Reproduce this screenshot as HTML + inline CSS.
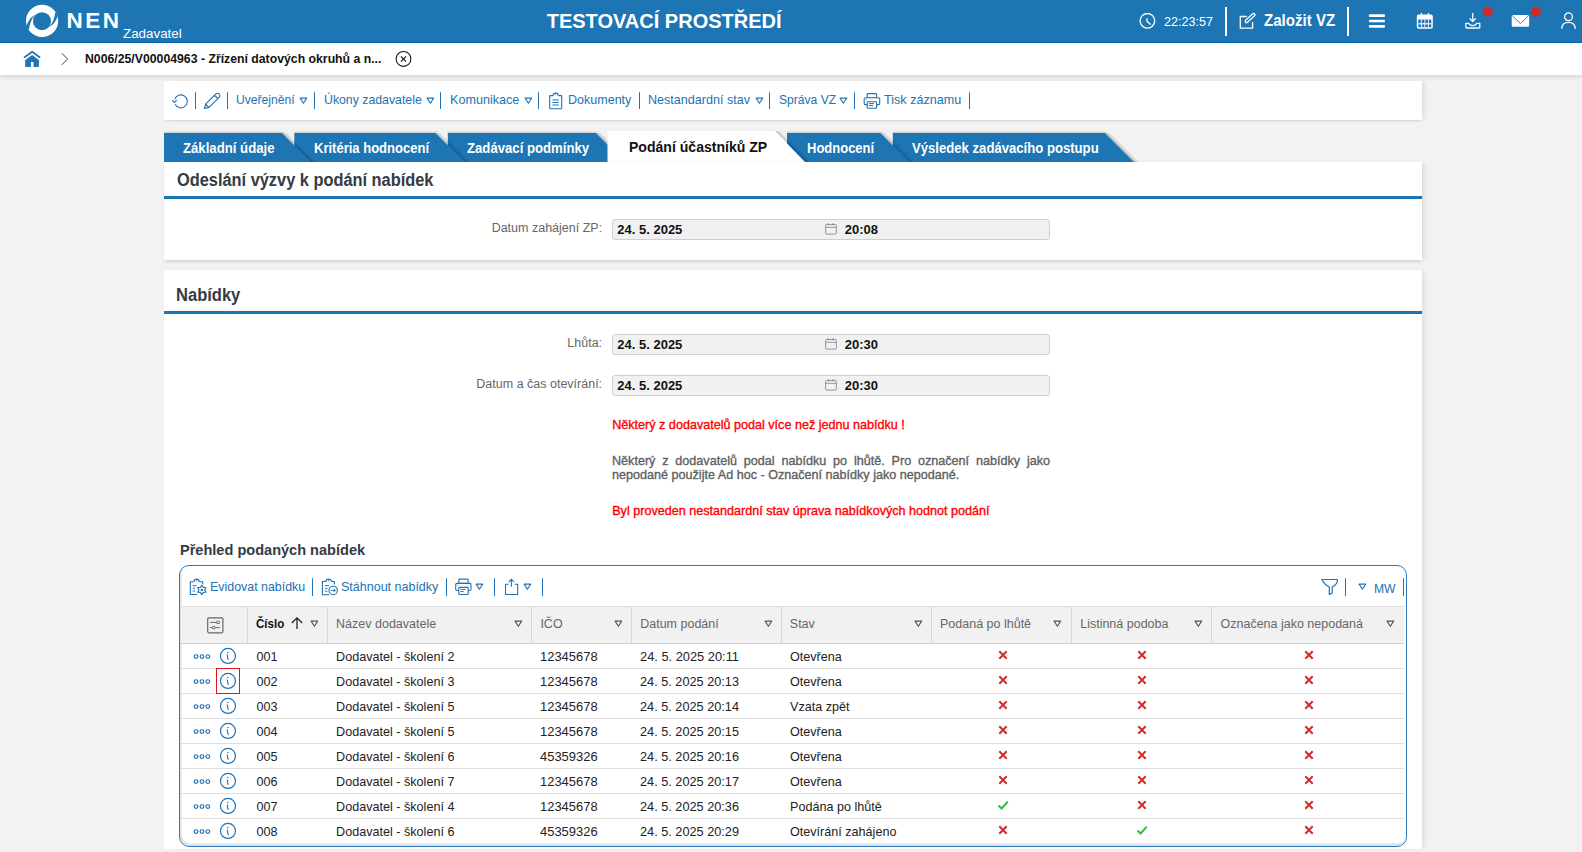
<!DOCTYPE html>
<html><head><meta charset="utf-8"><title>NEN</title><style>
*{margin:0;padding:0;box-sizing:border-box}
html,body{width:1582px;height:852px;overflow:hidden}
body{background:#f2f2f2;font-family:"Liberation Sans", sans-serif;position:relative}
.t{position:absolute;white-space:nowrap;line-height:1}
.r{position:absolute}
</style></head><body>
<div class="r" style="left:0px;top:0px;width:1582px;height:43px;background:#1d75b4;border-bottom:1px solid #0b68ae"></div>
<svg class="r" style="left:22px;top:2px;" width="40" height="40" viewBox="0 0 40 40"><circle cx="20.1" cy="18.9" r="16.1" fill="#fff"/><circle cx="20" cy="19.2" r="9" fill="#1d75b4"/><path d="M13.2 12.8 Q6.6 16.2 4.1 24.8 L6.9 27.9 Q7.8 18.6 13.2 12.8 Z" fill="#1d75b4"/><path d="M26.9 25.3 Q33.5 21.9 36 13.3 L33.2 10.2 Q32.3 19.5 26.9 25.3 Z" fill="#1d75b4"/></svg>
<div class="t" style="left:66.40px;top:9.65px;font-size:22.5px;color:#fff;font-weight:bold;letter-spacing:2.5px;">NEN</div>
<div class="t" style="left:123.30px;top:27.19px;font-size:13.6px;color:#fff;transform:scaleX(0.9827);transform-origin:0 0;">Zadavatel</div>
<div class="t" style="left:546.70px;top:10.87px;font-size:20px;color:#fff;font-weight:bold;">TESTOVACÍ PROSTŘEDÍ</div>
<svg class="r" style="left:1139px;top:13px;" width="17" height="17" viewBox="0 0 17 17"><circle cx="8.4" cy="7.8" r="7.3" fill="none" stroke="#fff" stroke-width="1.3"/><path d="M8 5.2V8.3L11.6 11.5" fill="none" stroke="#fff" stroke-width="1.3"/></svg>
<div class="t" style="left:1163.80px;top:16.06px;font-size:12.8px;color:#fff;transform:scaleX(0.9833);transform-origin:0 0;">22:23:57</div>
<div class="r" style="left:1225px;top:7px;width:2px;height:29px;background:#fff"></div>
<svg class="r" style="left:1238px;top:12px;" width="19" height="18" viewBox="0 0 19 18"><path d="M8.8 4.5H2.3V16.2H14.6V10" fill="none" stroke="#fff" stroke-width="1.3"/><path d="M8.6 9.3L15.6 2.8" stroke="#fff" stroke-width="4" stroke-linecap="round"/><path d="M8.6 9.3L15.6 2.8" stroke="#1d75b4" stroke-width="1.5" stroke-linecap="round"/></svg>
<div class="t" style="left:1263.80px;top:12.73px;font-size:15.8px;color:#fff;font-weight:bold;transform:scaleX(0.9557);transform-origin:0 0;">Založit VZ</div>
<div class="r" style="left:1347px;top:7px;width:2px;height:29px;background:#fff"></div>
<svg class="r" style="left:1368px;top:13px;" width="18" height="16" viewBox="0 0 18 16"><g fill="#fff"><rect x="0.9" y="1.3" width="16.1" height="2.7" rx="1"/><rect x="0.9" y="6.7" width="16.1" height="2.5" rx="1"/><rect x="0.9" y="11.95" width="16.1" height="2.7" rx="1"/></g></svg>
<svg class="r" style="left:1416px;top:12px;" width="18" height="18" viewBox="0 0 18 18"><rect x="1.55" y="3.3" width="14.5" height="12.65" rx="1.3" fill="none" stroke="#fff" stroke-width="1.5"/><rect x="1.5" y="3.3" width="14.6" height="4.3" fill="#fff"/><path d="M5.4 1V4M12.5 1V4" stroke="#fff" stroke-width="1.3"/><g fill="#fff"><rect x="2.3" y="11.2" width="13" height="1.2"/><rect x="4.9" y="7.5" width="0.9" height="8"/><rect x="8.4" y="7.5" width="0.9" height="8"/><rect x="11.9" y="7.5" width="0.9" height="8"/></g></svg>
<svg class="r" style="left:1464px;top:12px;" width="18" height="18" viewBox="0 0 18 18"><path d="M8.7 1V9.4M5.6 6.4L8.7 9.5L11.8 6.4" fill="none" stroke="#fff" stroke-width="1.3"/><path d="M1.8 11.4H4.6Q6 13.6 8.7 13.6Q11.4 13.6 12.8 11.4H15.8V15Q15.8 16 14.8 16H2.8Q1.8 16 1.8 15Z" fill="none" stroke="#fff" stroke-width="1.3" stroke-linejoin="round"/></svg>
<svg class="r" style="left:1482px;top:6px;" width="12" height="12" viewBox="0 0 12 12"><circle cx="5.8" cy="5.7" r="5.1" fill="#cc2a2a"/></svg>
<svg class="r" style="left:1511px;top:14px;" width="19" height="14" viewBox="0 0 19 14"><rect x="0.7" y="1.1" width="17.5" height="11.7" rx="1.6" fill="#fff"/><path d="M1.3 1.7L9.45 9.6L17.6 1.7" fill="none" stroke="#1e74b4" stroke-width="0.9"/></svg>
<svg class="r" style="left:1530px;top:6px;" width="12" height="12" viewBox="0 0 12 12"><circle cx="5.9" cy="5.7" r="5.1" fill="#cc2a2a"/></svg>
<svg class="r" style="left:1560px;top:12px;" width="17" height="18" viewBox="0 0 17 18"><circle cx="8.5" cy="4.7" r="3.9" fill="none" stroke="#fff" stroke-width="1.3"/><path d="M1.7 16.9Q2 10.4 8.5 10.4Q15 10.4 15.3 16.9" fill="none" stroke="#fff" stroke-width="1.3"/></svg>
<div class="r" style="left:0px;top:43px;width:1582px;height:32px;background:#fff;box-shadow:0 2px 5px rgba(0,0,0,0.12)"></div>
<svg class="r" style="left:23px;top:50px;" width="18" height="18" viewBox="0 0 18 18"><path d="M1.5 7.2L9.2 1.7L16.6 7.2" fill="none" stroke="#1e74b4" stroke-width="1.7" stroke-linecap="round" stroke-linejoin="round"/><path d="M2.2 10L9.2 5.1L15.9 10V16.2Q15.9 16.9 15.2 16.9H10.5V11.9H7.9V16.9H2.9Q2.2 16.9 2.2 16.2Z" fill="#1e74b4"/></svg>
<svg class="r" style="left:60px;top:52px;" width="10" height="14" viewBox="0 0 10 14"><path d="M1.8 1.2L7.6 7L1.8 12.8" fill="none" stroke="#3a4450" stroke-width="1"/></svg>
<div class="t" style="left:85.40px;top:52.83px;font-size:12.6px;color:#111;font-weight:bold;transform:scaleX(0.9736);transform-origin:0 0;">N006/25/V00004963 - Zřízení datových okruhů a n...</div>
<svg class="r" style="left:395px;top:50px;" width="17" height="17" viewBox="0 0 17 17"><circle cx="8.5" cy="8.95" r="7.4" fill="none" stroke="#111" stroke-width="1.05"/><path d="M6 6.3L11 11.6M11 6.3L6 11.6" stroke="#111" stroke-width="1.1"/></svg>
<div class="r" style="left:164px;top:81px;width:1258px;height:39px;background:#fff;box-shadow:0 2px 2px -1px rgba(0,0,0,0.13), 4px 0 4px -1px rgba(0,0,0,0.07)"></div>
<div class="r" style="left:195px;top:92px;width:1.2px;height:17px;border-radius:0.6px;background:#2272b4"></div>
<div class="r" style="left:227px;top:92px;width:1.2px;height:17px;border-radius:0.6px;background:#2272b4"></div>
<div class="r" style="left:314px;top:92px;width:1.2px;height:17px;border-radius:0.6px;background:#2272b4"></div>
<div class="r" style="left:440px;top:92px;width:1.2px;height:17px;border-radius:0.6px;background:#2272b4"></div>
<div class="r" style="left:538px;top:92px;width:1.2px;height:17px;border-radius:0.6px;background:#2272b4"></div>
<div class="r" style="left:639px;top:92px;width:1.2px;height:17px;border-radius:0.6px;background:#2272b4"></div>
<div class="r" style="left:769px;top:92px;width:1.2px;height:17px;border-radius:0.6px;background:#2272b4"></div>
<div class="r" style="left:854px;top:92px;width:1.2px;height:17px;border-radius:0.6px;background:#2272b4"></div>
<div class="r" style="left:969px;top:92px;width:1.2px;height:17px;border-radius:0.6px;background:#2272b4"></div>
<svg class="r" style="left:171px;top:92px;" width="18" height="18" viewBox="0 0 18 18"><path d="M3.7 7.4A6.45 6.45 0 1 1 4.1 12.3" fill="none" stroke="#2272b4" stroke-width="1.1"/><path d="M1.3 8.1L3.5 10.4L5.8 8.1" fill="none" stroke="#2272b4" stroke-width="1.1"/></svg>
<svg class="r" style="left:203px;top:92px;" width="19" height="18" viewBox="0 0 19 18"><path d="M1.4 16.4L2.6 12.2L12.8 2Q14.6 0.6 16.2 2Q17.6 3.6 16.2 5.4L6 15.4Z M11.6 3.4L14.7 6.5 M2.6 12.2L6 15.4" fill="none" stroke="#2272b4" stroke-width="1.1" stroke-linejoin="round"/></svg>
<div class="t" style="left:236.10px;top:93.70px;font-size:12.4px;color:#2272b4;transform:scaleX(0.9789);transform-origin:0 0;">Uveřejnění</div>
<div class="t" style="left:323.60px;top:93.70px;font-size:12.4px;color:#2272b4;transform:scaleX(0.9922);transform-origin:0 0;">Úkony zadavatele</div>
<div class="t" style="left:450.10px;top:93.70px;font-size:12.4px;color:#2272b4;transform:scaleX(1.0170);transform-origin:0 0;">Komunikace</div>
<div class="t" style="left:567.70px;top:93.70px;font-size:12.4px;color:#2272b4;transform:scaleX(1.0109);transform-origin:0 0;">Dokumenty</div>
<div class="t" style="left:648.20px;top:93.70px;font-size:12.4px;color:#2272b4;transform:scaleX(1.0145);transform-origin:0 0;">Nestandardní stav</div>
<div class="t" style="left:778.50px;top:93.70px;font-size:12.4px;color:#2272b4;transform:scaleX(0.9748);transform-origin:0 0;">Správa VZ</div>
<div class="t" style="left:884.30px;top:93.70px;font-size:12.4px;color:#2272b4;transform:scaleX(1.0168);transform-origin:0 0;">Tisk záznamu</div>
<svg class="r" style="left:299.0px;top:96.5px;" width="9" height="8" viewBox="0 0 9 8"><path d="M1.1 1.1H7.7L4.4 6.2Z" fill="none" stroke="#2272b4" stroke-width="1.1" stroke-linejoin="round"/></svg>
<svg class="r" style="left:425.9px;top:96.5px;" width="9" height="8" viewBox="0 0 9 8"><path d="M1.1 1.1H7.7L4.4 6.2Z" fill="none" stroke="#2272b4" stroke-width="1.1" stroke-linejoin="round"/></svg>
<svg class="r" style="left:524.1px;top:96.5px;" width="9" height="8" viewBox="0 0 9 8"><path d="M1.1 1.1H7.7L4.4 6.2Z" fill="none" stroke="#2272b4" stroke-width="1.1" stroke-linejoin="round"/></svg>
<svg class="r" style="left:754.9px;top:96.5px;" width="9" height="8" viewBox="0 0 9 8"><path d="M1.1 1.1H7.7L4.4 6.2Z" fill="none" stroke="#2272b4" stroke-width="1.1" stroke-linejoin="round"/></svg>
<svg class="r" style="left:839.4px;top:96.5px;" width="9" height="8" viewBox="0 0 9 8"><path d="M1.1 1.1H7.7L4.4 6.2Z" fill="none" stroke="#2272b4" stroke-width="1.1" stroke-linejoin="round"/></svg>
<svg class="r" style="left:548px;top:92px;" width="16" height="18" viewBox="0 0 16 18"><path d="M5.1 3.6H1.7V16.2Q1.7 16.7 2.2 16.7H13.2Q13.7 16.7 13.7 16.2V3.6H10.2" fill="none" stroke="#2272b4" stroke-width="1.1" stroke-linejoin="round"/><path d="M5.1 3.6Q5.1 1.1 7.65 1.1Q10.2 1.1 10.2 3.6" fill="none" stroke="#2272b4" stroke-width="1.1"/><circle cx="7.65" cy="2.7" r="0.55" fill="#2272b4"/><path d="M4.4 8H10.9M4.4 10.5H10.9M4.4 13H10.9" stroke="#2272b4" stroke-width="1"/></svg>
<svg class="r" style="left:863px;top:92px;" width="18" height="18" viewBox="0 0 18 18"><rect x="4.2" y="1.6" width="9.4" height="4.2" rx="0.8" fill="none" stroke="#2272b4" stroke-width="1.1"/><rect x="1.2" y="5.8" width="15.5" height="6.8" rx="1.2" fill="#fff" stroke="#2272b4" stroke-width="1.1"/><rect x="4.2" y="9.7" width="9.4" height="6.6" rx="0.6" fill="#fff" stroke="#2272b4" stroke-width="1.1"/><path d="M6 11.6H11M6 13.6H10" stroke="#2272b4" stroke-width="1"/><circle cx="3.6" cy="7.6" r="0.5" fill="#2272b4"/></svg>
<svg class="r" style="left:0px;top:0px;pointer-events:none" width="1582" height="852" viewBox="0 0 1582 852"><rect x="892.8" y="131" width="214.20000000000005" height="2" fill="#000" fill-opacity="0.06"/><rect x="892.8" y="132" width="213.20000000000005" height="1" fill="#000" fill-opacity="0.06"/><path d="M1105.8 133 L1134.8 162" stroke="#000" stroke-opacity="0.22" stroke-width="1"/><path d="M1106.8 133 L1135.8 162" stroke="#000" stroke-opacity="0.16" stroke-width="1"/><path d="M1107.8 133 L1136.8 162" stroke="#000" stroke-opacity="0.11" stroke-width="1"/><path d="M1108.8 133 L1137.8 162" stroke="#000" stroke-opacity="0.07" stroke-width="1"/><path d="M1109.8 133 L1138.8 162" stroke="#000" stroke-opacity="0.035" stroke-width="1"/><path d="M892.8 133 H1105 L1134 162 H892.8 Z" fill="#1d75b4"/><rect x="787" y="131" width="95.5" height="2" fill="#000" fill-opacity="0.06"/><rect x="787" y="132" width="94.5" height="1" fill="#000" fill-opacity="0.06"/><path d="M881.3 133 L910.3 162" stroke="#000" stroke-opacity="0.22" stroke-width="1"/><path d="M882.3 133 L911.3 162" stroke="#000" stroke-opacity="0.16" stroke-width="1"/><path d="M883.3 133 L912.3 162" stroke="#000" stroke-opacity="0.11" stroke-width="1"/><path d="M884.3 133 L913.3 162" stroke="#000" stroke-opacity="0.07" stroke-width="1"/><path d="M885.3 133 L914.3 162" stroke="#000" stroke-opacity="0.035" stroke-width="1"/><path d="M787 133 H880.5 L909.5 162 H787 Z" fill="#1d75b4"/><rect x="447.8" y="131" width="150.2" height="2" fill="#000" fill-opacity="0.06"/><rect x="447.8" y="132" width="149.2" height="1" fill="#000" fill-opacity="0.06"/><path d="M596.8 133 L625.8 162" stroke="#000" stroke-opacity="0.22" stroke-width="1"/><path d="M597.8 133 L626.8 162" stroke="#000" stroke-opacity="0.16" stroke-width="1"/><path d="M598.8 133 L627.8 162" stroke="#000" stroke-opacity="0.11" stroke-width="1"/><path d="M599.8 133 L628.8 162" stroke="#000" stroke-opacity="0.07" stroke-width="1"/><path d="M600.8 133 L629.8 162" stroke="#000" stroke-opacity="0.035" stroke-width="1"/><path d="M447.8 133 H596 L625 162 H447.8 Z" fill="#1d75b4"/><rect x="294.3" y="131" width="143.3" height="2" fill="#000" fill-opacity="0.06"/><rect x="294.3" y="132" width="142.3" height="1" fill="#000" fill-opacity="0.06"/><path d="M436.40000000000003 133 L465.40000000000003 162" stroke="#000" stroke-opacity="0.22" stroke-width="1"/><path d="M437.40000000000003 133 L466.40000000000003 162" stroke="#000" stroke-opacity="0.16" stroke-width="1"/><path d="M438.40000000000003 133 L467.40000000000003 162" stroke="#000" stroke-opacity="0.11" stroke-width="1"/><path d="M439.40000000000003 133 L468.40000000000003 162" stroke="#000" stroke-opacity="0.07" stroke-width="1"/><path d="M440.40000000000003 133 L469.40000000000003 162" stroke="#000" stroke-opacity="0.035" stroke-width="1"/><path d="M294.3 133 H435.6 L464.6 162 H294.3 Z" fill="#1d75b4"/><rect x="164" y="131" width="120" height="2" fill="#000" fill-opacity="0.06"/><rect x="164" y="132" width="119" height="1" fill="#000" fill-opacity="0.06"/><path d="M282.8 133 L311.8 162" stroke="#000" stroke-opacity="0.22" stroke-width="1"/><path d="M283.8 133 L312.8 162" stroke="#000" stroke-opacity="0.16" stroke-width="1"/><path d="M284.8 133 L313.8 162" stroke="#000" stroke-opacity="0.11" stroke-width="1"/><path d="M285.8 133 L314.8 162" stroke="#000" stroke-opacity="0.07" stroke-width="1"/><path d="M286.8 133 L315.8 162" stroke="#000" stroke-opacity="0.035" stroke-width="1"/><path d="M164 133 H282 L311 162 H164 Z" fill="#1d75b4"/><path d="M775.6999999999999 131 L806.6999999999999 162" stroke="#000" stroke-opacity="0.22" stroke-width="1"/><path d="M776.6999999999999 131 L807.6999999999999 162" stroke="#000" stroke-opacity="0.16" stroke-width="1"/><path d="M777.6999999999999 131 L808.6999999999999 162" stroke="#000" stroke-opacity="0.11" stroke-width="1"/><path d="M778.6999999999999 131 L809.6999999999999 162" stroke="#000" stroke-opacity="0.07" stroke-width="1"/><path d="M779.6999999999999 131 L810.6999999999999 162" stroke="#000" stroke-opacity="0.035" stroke-width="1"/><path d="M607.5 131 H774.9 L804.9 162 H607.5 Z" fill="#fff"/></svg>
<div class="t" style="left:183.30px;top:142.02px;font-size:13.8px;color:#fff;font-weight:bold;transform:scaleX(0.9546);transform-origin:0 0;">Základní údaje</div>
<div class="t" style="left:313.50px;top:142.02px;font-size:13.8px;color:#fff;font-weight:bold;transform:scaleX(0.9436);transform-origin:0 0;">Kritéria hodnocení</div>
<div class="t" style="left:466.70px;top:142.02px;font-size:13.8px;color:#fff;font-weight:bold;transform:scaleX(0.9533);transform-origin:0 0;">Zadávací podmínky</div>
<div class="t" style="left:806.50px;top:142.02px;font-size:13.8px;color:#fff;font-weight:bold;transform:scaleX(0.9417);transform-origin:0 0;">Hodnocení</div>
<div class="t" style="left:912.30px;top:142.02px;font-size:13.8px;color:#fff;font-weight:bold;transform:scaleX(0.9509);transform-origin:0 0;">Výsledek zadávacího postupu</div>
<div class="r" style="left:164px;top:162px;width:1258px;height:98px;background:#fff;box-shadow:0 3px 3px -1px rgba(0,0,0,0.12), 4px 0 4px -1px rgba(0,0,0,0.07)"></div>
<div class="t" style="left:629.00px;top:139.93px;font-size:14.5px;color:#111;font-weight:bold;transform:scaleX(0.9691);transform-origin:0 0;">Podání účastníků ZP</div>
<div class="t" style="left:176.70px;top:170.66px;font-size:18px;color:#343b43;font-weight:bold;transform:scaleX(0.9091);transform-origin:0 0;">Odeslání výzvy k podání nabídek</div>
<div class="r" style="left:164px;top:196px;width:1258px;height:3px;background:#1d75b4"></div>
<div class="r" style="left:612px;top:219px;width:438px;height:21px;background:#f1f1f1;border:1px solid #cfcfcf;border-radius:3px"></div>
<div class="t" style="right:979.90px;top:222.22px;font-size:12.5px;color:#666;">Datum zahájení ZP:</div>
<div class="t" style="left:617.30px;top:223.20px;font-size:13px;color:#111;font-weight:bold;">24. 5. 2025</div>
<svg class="r" style="left:824px;top:223px;" width="14" height="13" viewBox="0 0 14 13"><rect x="1.65" y="1.5" width="10.7" height="9.6" rx="0.9" fill="none" stroke="#8a8a8a" stroke-width="0.9"/><path d="M1.6 4.3H12.4M4.3 0V2.3M9 0V2.3" stroke="#8a8a8a" stroke-width="0.9"/></svg>
<div class="t" style="left:844.70px;top:223.20px;font-size:13px;color:#111;font-weight:bold;">20:08</div>
<div class="r" style="left:164px;top:270px;width:1258px;height:579px;background:#fff;box-shadow:4px 0 4px -1px rgba(0,0,0,0.07)"></div>
<div class="t" style="left:176.40px;top:285.56px;font-size:18px;color:#343b43;font-weight:bold;transform:scaleX(0.9183);transform-origin:0 0;">Nabídky</div>
<div class="r" style="left:164px;top:311px;width:1258px;height:3px;background:#1d75b4"></div>
<div class="r" style="left:612px;top:334px;width:438px;height:21px;background:#f1f1f1;border:1px solid #cfcfcf;border-radius:3px"></div>
<div class="t" style="right:979.90px;top:337.02px;font-size:12.5px;color:#666;">Lhůta:</div>
<div class="t" style="left:617.30px;top:338.20px;font-size:13px;color:#111;font-weight:bold;">24. 5. 2025</div>
<svg class="r" style="left:824px;top:338px;" width="14" height="13" viewBox="0 0 14 13"><rect x="1.65" y="1.5" width="10.7" height="9.6" rx="0.9" fill="none" stroke="#8a8a8a" stroke-width="0.9"/><path d="M1.6 4.3H12.4M4.3 0V2.3M9 0V2.3" stroke="#8a8a8a" stroke-width="0.9"/></svg>
<div class="t" style="left:844.70px;top:338.20px;font-size:13px;color:#111;font-weight:bold;">20:30</div>
<div class="r" style="left:612px;top:375px;width:438px;height:21px;background:#f1f1f1;border:1px solid #cfcfcf;border-radius:3px"></div>
<div class="t" style="right:979.90px;top:377.62px;font-size:12.5px;color:#666;">Datum a čas otevírání:</div>
<div class="t" style="left:617.30px;top:379.20px;font-size:13px;color:#111;font-weight:bold;">24. 5. 2025</div>
<svg class="r" style="left:824px;top:379px;" width="14" height="13" viewBox="0 0 14 13"><rect x="1.65" y="1.5" width="10.7" height="9.6" rx="0.9" fill="none" stroke="#8a8a8a" stroke-width="0.9"/><path d="M1.6 4.3H12.4M4.3 0V2.3M9 0V2.3" stroke="#8a8a8a" stroke-width="0.9"/></svg>
<div class="t" style="left:844.70px;top:379.20px;font-size:13px;color:#111;font-weight:bold;">20:30</div>
<div class="t" style="left:612.20px;top:418.83px;font-size:12.6px;color:#ff0000;-webkit-text-stroke:0.35px currentColor;">Některý z dodavatelů podal více než jednu nabídku !</div>
<div class="t" style="left:612px;top:453.53px;width:438px;font-size:12.6px;line-height:14.6px;color:#5f5f5f;white-space:normal;text-align:justify;-webkit-text-stroke:0.35px currentColor;">Některý z dodavatelů podal nabídku po lhůtě. Pro označení nabídky jako nepodané použijte Ad hoc - Označení nabídky jako nepodané.</div>
<div class="t" style="left:612.20px;top:505.43px;font-size:12.6px;color:#ff0000;-webkit-text-stroke:0.35px currentColor;">Byl proveden nestandardní stav úprava nabídkových hodnot podání</div>
<div class="t" style="left:179.60px;top:542.30px;font-size:15px;color:#343b43;font-weight:bold;transform:scaleX(0.9696);transform-origin:0 0;">Přehled podaných nabídek</div>
<div class="r" style="left:179px;top:564.5px;width:1228px;height:282.5px;border:1.3px solid #2f7bbf;border-radius:10px;background:#fff;box-shadow:inset 1.5px -2.5px 1px rgba(0,0,0,0.12)"></div>
<div class="r" style="left:312px;top:578px;width:1.2px;height:18px;border-radius:0.6px;background:#2272b4"></div>
<div class="r" style="left:446px;top:578px;width:1.2px;height:18px;border-radius:0.6px;background:#2272b4"></div>
<div class="r" style="left:494px;top:578px;width:1.2px;height:18px;border-radius:0.6px;background:#2272b4"></div>
<div class="r" style="left:542px;top:578px;width:1.2px;height:18px;border-radius:0.6px;background:#2272b4"></div>
<div class="r" style="left:1345px;top:578px;width:1.2px;height:18px;border-radius:0.6px;background:#2272b4"></div>
<div class="r" style="left:1403px;top:578px;width:1.2px;height:18px;border-radius:0.6px;background:#2272b4"></div>
<div class="t" style="left:210.00px;top:580.70px;font-size:12.4px;color:#2272b4;transform:scaleX(1.0018);transform-origin:0 0;">Evidovat nabídku</div>
<div class="t" style="left:341.40px;top:580.70px;font-size:12.4px;color:#2272b4;transform:scaleX(1.0091);transform-origin:0 0;">Stáhnout nabídky</div>
<div class="t" style="left:1373.90px;top:582.80px;font-size:12.4px;color:#2272b4;transform:scaleX(0.9803);transform-origin:0 0;">MW</div>
<svg class="r" style="left:475.1px;top:583.3px;" width="9" height="8" viewBox="0 0 9 8"><path d="M1.1 1.1H7.7L4.4 6.2Z" fill="none" stroke="#2272b4" stroke-width="1.1" stroke-linejoin="round"/></svg>
<svg class="r" style="left:523.2px;top:583.3px;" width="9" height="8" viewBox="0 0 9 8"><path d="M1.1 1.1H7.7L4.4 6.2Z" fill="none" stroke="#2272b4" stroke-width="1.1" stroke-linejoin="round"/></svg>
<svg class="r" style="left:1357.5px;top:583.3px;" width="9" height="8" viewBox="0 0 9 8"><path d="M1.1 1.1H7.7L4.4 6.2Z" fill="none" stroke="#2272b4" stroke-width="1.1" stroke-linejoin="round"/></svg>
<svg class="r" style="left:189px;top:577px;" width="19" height="19" viewBox="0 0 19 19"><path d="M5.2 4.7H1.3V17.5H8.2M10.2 4.7H13.7V7.2" fill="none" stroke="#2272b4" stroke-width="1.1"/><path d="M5 4.7Q5 2.1 7.6 2.1Q10.2 2.1 10.2 4.7" fill="none" stroke="#2272b4" stroke-width="1.1"/><circle cx="7.6" cy="3.8" r="0.6" fill="#2272b4"/><path d="M3.7 8.7H7.6M3.7 11.2H6M3.7 14H6" stroke="#2272b4" stroke-width="1"/><path d="M12.80 8.20 L14.25 10.39 L16.87 10.55 L15.70 12.90 L16.87 15.25 L14.25 15.41 L12.80 17.60 L11.35 15.41 L8.73 15.25 L9.90 12.90 L8.73 10.55 L11.35 10.39Z" fill="#fff" stroke="#2272b4" stroke-width="1.1" stroke-linejoin="round"/><circle cx="12.8" cy="12.9" r="1.2" fill="#2272b4"/></svg>
<svg class="r" style="left:320px;top:577px;" width="19" height="19" viewBox="0 0 19 19"><path d="M6.2 4.5H2.4V17.7H9M11 4.5H14.4V7.5" fill="none" stroke="#2272b4" stroke-width="1.1"/><path d="M6 4.5Q6 2.1 8.6 2.1Q11.2 2.1 11.2 4.5" fill="none" stroke="#2272b4" stroke-width="1.1"/><circle cx="8.6" cy="3.7" r="0.6" fill="#2272b4"/><path d="M5 8.6H9M5 11.4H7.5M5 14.2H7.5" stroke="#2272b4" stroke-width="1"/><circle cx="13.2" cy="13.4" r="4.2" fill="#fff" stroke="#2272b4" stroke-width="1.1"/><path d="M10.8 13.4H15.3M13.7 11.8L15.3 13.4L13.7 15" fill="none" stroke="#2272b4" stroke-width="1"/></svg>
<svg class="r" style="left:454px;top:577px;" width="19" height="19" viewBox="0 0 19 19"><rect x="4.8" y="2.1" width="9.4" height="4.3" rx="0.8" fill="none" stroke="#2272b4" stroke-width="1.1"/><rect x="1.7" y="6.4" width="15.3" height="7.1" rx="1.2" fill="#fff" stroke="#2272b4" stroke-width="1.1"/><rect x="4.8" y="10.4" width="9.4" height="7.1" rx="0.6" fill="#fff" stroke="#2272b4" stroke-width="1.1"/><path d="M6.4 12.4H11.6M6.4 14.5H9.6" stroke="#2272b4" stroke-width="1"/><circle cx="3.9" cy="8.5" r="0.5" fill="#2272b4"/></svg>
<svg class="r" style="left:503px;top:577px;" width="17" height="19" viewBox="0 0 17 19"><path d="M5.5 7.2H2.5V17.5H14.7V7.2H11.6" fill="none" stroke="#2272b4" stroke-width="1.1" stroke-linejoin="round"/><path d="M8.4 9.8V2.3M5.8 4.9L8.4 2.3L11 4.9" fill="none" stroke="#2272b4" stroke-width="1.1"/></svg>
<svg class="r" style="left:1320px;top:577px;" width="20" height="19" viewBox="0 0 20 19"><path d="M1.9 2.5H17.5Q17.6 7.2 12.2 10V16L9.3 17.5V10Q3.9 7.2 1.9 2.5Z" fill="none" stroke="#2272b4" stroke-width="1.2" stroke-linejoin="round"/></svg>
<div class="r" style="left:181px;top:606px;width:1223px;height:38px;background:#f1f1f1;border-top:1px solid #dddddd;border-bottom:1px solid #d0d0d0"></div>
<div class="r" style="left:246.80px;top:607px;width:1px;height:36px;background:#d6d6d6"></div>
<div class="r" style="left:326.80px;top:607px;width:1px;height:36px;background:#d6d6d6"></div>
<div class="r" style="left:530.60px;top:607px;width:1px;height:36px;background:#d6d6d6"></div>
<div class="r" style="left:630.80px;top:607px;width:1px;height:36px;background:#d6d6d6"></div>
<div class="r" style="left:781.00px;top:607px;width:1px;height:36px;background:#d6d6d6"></div>
<div class="r" style="left:931.20px;top:607px;width:1px;height:36px;background:#d6d6d6"></div>
<div class="r" style="left:1071.00px;top:607px;width:1px;height:36px;background:#d6d6d6"></div>
<div class="r" style="left:1211.20px;top:607px;width:1px;height:36px;background:#d6d6d6"></div>
<svg class="r" style="left:206px;top:616px;" width="18" height="18" viewBox="0 0 18 18"><rect x="1.7" y="1.8" width="15.2" height="15.0" rx="1.2" fill="none" stroke="#666" stroke-width="1.2"/><path d="M4.2 6.4H10.8M4.2 11.6H13.8" stroke="#666" stroke-width="1"/><ellipse cx="12.1" cy="6.4" rx="1.7" ry="1.25" fill="#f1f1f1" stroke="#666" stroke-width="1"/><ellipse cx="7.8" cy="11.6" rx="1.7" ry="1.25" fill="#f1f1f1" stroke="#666" stroke-width="1"/></svg>
<div class="t" style="left:256.40px;top:618.16px;font-size:12.8px;color:#111;font-weight:bold;transform:scaleX(0.9043);transform-origin:0 0;">Číslo</div>
<svg class="r" style="left:290px;top:616px;" width="14" height="14" viewBox="0 0 14 14"><path d="M7 13V1.8M1.8 7L7 1.8L12.2 7" fill="none" stroke="#222" stroke-width="1.3"/></svg>
<svg class="r" style="left:309.8px;top:619.5px;" width="9" height="8" viewBox="0 0 9 8"><path d="M1.1 1.1H7.7L4.4 6.2Z" fill="none" stroke="#555" stroke-width="1.1" stroke-linejoin="round"/></svg>
<div class="t" style="left:336.10px;top:618.42px;font-size:12.5px;color:#666;">Název dodavatele</div>
<svg class="r" style="left:513.9px;top:619.5px;" width="9" height="8" viewBox="0 0 9 8"><path d="M1.1 1.1H7.7L4.4 6.2Z" fill="none" stroke="#555" stroke-width="1.1" stroke-linejoin="round"/></svg>
<div class="t" style="left:540.40px;top:618.42px;font-size:12.5px;color:#666;">IČO</div>
<svg class="r" style="left:614.1px;top:619.5px;" width="9" height="8" viewBox="0 0 9 8"><path d="M1.1 1.1H7.7L4.4 6.2Z" fill="none" stroke="#555" stroke-width="1.1" stroke-linejoin="round"/></svg>
<div class="t" style="left:640.20px;top:618.42px;font-size:12.5px;color:#666;">Datum podání</div>
<svg class="r" style="left:763.7px;top:619.5px;" width="9" height="8" viewBox="0 0 9 8"><path d="M1.1 1.1H7.7L4.4 6.2Z" fill="none" stroke="#555" stroke-width="1.1" stroke-linejoin="round"/></svg>
<div class="t" style="left:789.80px;top:618.42px;font-size:12.5px;color:#666;">Stav</div>
<svg class="r" style="left:913.9px;top:619.5px;" width="9" height="8" viewBox="0 0 9 8"><path d="M1.1 1.1H7.7L4.4 6.2Z" fill="none" stroke="#555" stroke-width="1.1" stroke-linejoin="round"/></svg>
<div class="t" style="left:940.00px;top:618.42px;font-size:12.5px;color:#666;">Podaná po lhůtě</div>
<svg class="r" style="left:1053.3px;top:619.5px;" width="9" height="8" viewBox="0 0 9 8"><path d="M1.1 1.1H7.7L4.4 6.2Z" fill="none" stroke="#555" stroke-width="1.1" stroke-linejoin="round"/></svg>
<div class="t" style="left:1080.20px;top:618.42px;font-size:12.5px;color:#666;">Listinná podoba</div>
<svg class="r" style="left:1193.5px;top:619.5px;" width="9" height="8" viewBox="0 0 9 8"><path d="M1.1 1.1H7.7L4.4 6.2Z" fill="none" stroke="#555" stroke-width="1.1" stroke-linejoin="round"/></svg>
<div class="t" style="left:1220.50px;top:618.42px;font-size:12.5px;color:#666;">Označena jako nepodaná</div>
<svg class="r" style="left:1386.0px;top:619.5px;" width="9" height="8" viewBox="0 0 9 8"><path d="M1.1 1.1H7.7L4.4 6.2Z" fill="none" stroke="#555" stroke-width="1.1" stroke-linejoin="round"/></svg>
<div class="r" style="left:181px;top:668px;width:1223px;height:1px;background:#dedede"></div>
<svg class="r" style="left:192px;top:651.5px;" width="20" height="9" viewBox="0 0 20 9"><g fill="none" stroke="#2272b4" stroke-width="1.2"><circle cx="4" cy="4.6" r="1.85"/><circle cx="9.95" cy="4.6" r="1.85"/><circle cx="15.8" cy="4.6" r="1.85"/></g></svg>
<svg class="r" style="left:218px;top:646px;" width="20" height="20" viewBox="0 0 20 20"><circle cx="9.95" cy="9.9" r="7.5" fill="none" stroke="#2272b4" stroke-width="1.2"/><circle cx="9.8" cy="6.5" r="0.75" fill="#2272b4"/><path d="M8.7 8.7Q9.6 8.8 9.6 9.7V11.8Q9.6 13.1 10.9 13.5" fill="none" stroke="#2272b4" stroke-width="1.1"/></svg>
<div class="t" style="left:256.50px;top:651.23px;font-size:12.6px;color:#222;">001</div>
<div class="t" style="left:336.10px;top:651.23px;font-size:12.6px;color:#222;">Dodavatel - školení 2</div>
<div class="t" style="left:790.00px;top:651.23px;font-size:12.6px;color:#222;">Otevřena</div>
<div class="t" style="left:540.30px;top:651.23px;font-size:12.6px;color:#222;transform:scaleX(1.0275);transform-origin:0 0;">12345678</div>
<div class="t" style="left:640.30px;top:651.23px;font-size:12.6px;color:#222;transform:scaleX(1.0191);transform-origin:0 0;">24. 5. 2025 20:11</div>
<svg class="r" style="left:996.5px;top:649px;" width="12" height="12" viewBox="0 0 12 12"><path d="M2.3 2.3L9.7 9.7M9.7 2.3L2.3 9.7" stroke="#d42a2a" stroke-width="2"/></svg>
<svg class="r" style="left:1136.4px;top:649px;" width="12" height="12" viewBox="0 0 12 12"><path d="M2.3 2.3L9.7 9.7M9.7 2.3L2.3 9.7" stroke="#d42a2a" stroke-width="2"/></svg>
<svg class="r" style="left:1302.5px;top:649px;" width="12" height="12" viewBox="0 0 12 12"><path d="M2.3 2.3L9.7 9.7M9.7 2.3L2.3 9.7" stroke="#d42a2a" stroke-width="2"/></svg>
<div class="r" style="left:181px;top:693px;width:1223px;height:1px;background:#dedede"></div>
<svg class="r" style="left:192px;top:676.5px;" width="20" height="9" viewBox="0 0 20 9"><g fill="none" stroke="#2272b4" stroke-width="1.2"><circle cx="4" cy="4.6" r="1.85"/><circle cx="9.95" cy="4.6" r="1.85"/><circle cx="15.8" cy="4.6" r="1.85"/></g></svg>
<svg class="r" style="left:218px;top:671px;" width="20" height="20" viewBox="0 0 20 20"><circle cx="9.95" cy="9.9" r="7.5" fill="none" stroke="#2272b4" stroke-width="1.2"/><circle cx="9.8" cy="6.5" r="0.75" fill="#2272b4"/><path d="M8.7 8.7Q9.6 8.8 9.6 9.7V11.8Q9.6 13.1 10.9 13.5" fill="none" stroke="#2272b4" stroke-width="1.1"/></svg>
<div class="t" style="left:256.50px;top:676.23px;font-size:12.6px;color:#222;">002</div>
<div class="t" style="left:336.10px;top:676.23px;font-size:12.6px;color:#222;">Dodavatel - školení 3</div>
<div class="t" style="left:790.00px;top:676.23px;font-size:12.6px;color:#222;">Otevřena</div>
<div class="t" style="left:540.30px;top:676.23px;font-size:12.6px;color:#222;transform:scaleX(1.0275);transform-origin:0 0;">12345678</div>
<div class="t" style="left:640.30px;top:676.23px;font-size:12.6px;color:#222;transform:scaleX(1.0093);transform-origin:0 0;">24. 5. 2025 20:13</div>
<svg class="r" style="left:996.5px;top:674px;" width="12" height="12" viewBox="0 0 12 12"><path d="M2.3 2.3L9.7 9.7M9.7 2.3L2.3 9.7" stroke="#d42a2a" stroke-width="2"/></svg>
<svg class="r" style="left:1136.4px;top:674px;" width="12" height="12" viewBox="0 0 12 12"><path d="M2.3 2.3L9.7 9.7M9.7 2.3L2.3 9.7" stroke="#d42a2a" stroke-width="2"/></svg>
<svg class="r" style="left:1302.5px;top:674px;" width="12" height="12" viewBox="0 0 12 12"><path d="M2.3 2.3L9.7 9.7M9.7 2.3L2.3 9.7" stroke="#d42a2a" stroke-width="2"/></svg>
<div class="r" style="left:181px;top:718px;width:1223px;height:1px;background:#dedede"></div>
<svg class="r" style="left:192px;top:701.5px;" width="20" height="9" viewBox="0 0 20 9"><g fill="none" stroke="#2272b4" stroke-width="1.2"><circle cx="4" cy="4.6" r="1.85"/><circle cx="9.95" cy="4.6" r="1.85"/><circle cx="15.8" cy="4.6" r="1.85"/></g></svg>
<svg class="r" style="left:218px;top:696px;" width="20" height="20" viewBox="0 0 20 20"><circle cx="9.95" cy="9.9" r="7.5" fill="none" stroke="#2272b4" stroke-width="1.2"/><circle cx="9.8" cy="6.5" r="0.75" fill="#2272b4"/><path d="M8.7 8.7Q9.6 8.8 9.6 9.7V11.8Q9.6 13.1 10.9 13.5" fill="none" stroke="#2272b4" stroke-width="1.1"/></svg>
<div class="t" style="left:256.50px;top:701.23px;font-size:12.6px;color:#222;">003</div>
<div class="t" style="left:336.10px;top:701.23px;font-size:12.6px;color:#222;">Dodavatel - školení 5</div>
<div class="t" style="left:790.00px;top:701.23px;font-size:12.6px;color:#222;">Vzata zpět</div>
<div class="t" style="left:540.30px;top:701.23px;font-size:12.6px;color:#222;transform:scaleX(1.0275);transform-origin:0 0;">12345678</div>
<div class="t" style="left:640.30px;top:701.23px;font-size:12.6px;color:#222;transform:scaleX(1.0093);transform-origin:0 0;">24. 5. 2025 20:14</div>
<svg class="r" style="left:996.5px;top:699px;" width="12" height="12" viewBox="0 0 12 12"><path d="M2.3 2.3L9.7 9.7M9.7 2.3L2.3 9.7" stroke="#d42a2a" stroke-width="2"/></svg>
<svg class="r" style="left:1136.4px;top:699px;" width="12" height="12" viewBox="0 0 12 12"><path d="M2.3 2.3L9.7 9.7M9.7 2.3L2.3 9.7" stroke="#d42a2a" stroke-width="2"/></svg>
<svg class="r" style="left:1302.5px;top:699px;" width="12" height="12" viewBox="0 0 12 12"><path d="M2.3 2.3L9.7 9.7M9.7 2.3L2.3 9.7" stroke="#d42a2a" stroke-width="2"/></svg>
<div class="r" style="left:181px;top:743px;width:1223px;height:1px;background:#dedede"></div>
<svg class="r" style="left:192px;top:726.5px;" width="20" height="9" viewBox="0 0 20 9"><g fill="none" stroke="#2272b4" stroke-width="1.2"><circle cx="4" cy="4.6" r="1.85"/><circle cx="9.95" cy="4.6" r="1.85"/><circle cx="15.8" cy="4.6" r="1.85"/></g></svg>
<svg class="r" style="left:218px;top:721px;" width="20" height="20" viewBox="0 0 20 20"><circle cx="9.95" cy="9.9" r="7.5" fill="none" stroke="#2272b4" stroke-width="1.2"/><circle cx="9.8" cy="6.5" r="0.75" fill="#2272b4"/><path d="M8.7 8.7Q9.6 8.8 9.6 9.7V11.8Q9.6 13.1 10.9 13.5" fill="none" stroke="#2272b4" stroke-width="1.1"/></svg>
<div class="t" style="left:256.50px;top:726.23px;font-size:12.6px;color:#222;">004</div>
<div class="t" style="left:336.10px;top:726.23px;font-size:12.6px;color:#222;">Dodavatel - školení 5</div>
<div class="t" style="left:790.00px;top:726.23px;font-size:12.6px;color:#222;">Otevřena</div>
<div class="t" style="left:540.30px;top:726.23px;font-size:12.6px;color:#222;transform:scaleX(1.0275);transform-origin:0 0;">12345678</div>
<div class="t" style="left:640.30px;top:726.23px;font-size:12.6px;color:#222;transform:scaleX(1.0093);transform-origin:0 0;">24. 5. 2025 20:15</div>
<svg class="r" style="left:996.5px;top:724px;" width="12" height="12" viewBox="0 0 12 12"><path d="M2.3 2.3L9.7 9.7M9.7 2.3L2.3 9.7" stroke="#d42a2a" stroke-width="2"/></svg>
<svg class="r" style="left:1136.4px;top:724px;" width="12" height="12" viewBox="0 0 12 12"><path d="M2.3 2.3L9.7 9.7M9.7 2.3L2.3 9.7" stroke="#d42a2a" stroke-width="2"/></svg>
<svg class="r" style="left:1302.5px;top:724px;" width="12" height="12" viewBox="0 0 12 12"><path d="M2.3 2.3L9.7 9.7M9.7 2.3L2.3 9.7" stroke="#d42a2a" stroke-width="2"/></svg>
<div class="r" style="left:181px;top:768px;width:1223px;height:1px;background:#dedede"></div>
<svg class="r" style="left:192px;top:751.5px;" width="20" height="9" viewBox="0 0 20 9"><g fill="none" stroke="#2272b4" stroke-width="1.2"><circle cx="4" cy="4.6" r="1.85"/><circle cx="9.95" cy="4.6" r="1.85"/><circle cx="15.8" cy="4.6" r="1.85"/></g></svg>
<svg class="r" style="left:218px;top:746px;" width="20" height="20" viewBox="0 0 20 20"><circle cx="9.95" cy="9.9" r="7.5" fill="none" stroke="#2272b4" stroke-width="1.2"/><circle cx="9.8" cy="6.5" r="0.75" fill="#2272b4"/><path d="M8.7 8.7Q9.6 8.8 9.6 9.7V11.8Q9.6 13.1 10.9 13.5" fill="none" stroke="#2272b4" stroke-width="1.1"/></svg>
<div class="t" style="left:256.50px;top:751.23px;font-size:12.6px;color:#222;">005</div>
<div class="t" style="left:336.10px;top:751.23px;font-size:12.6px;color:#222;">Dodavatel - školení 6</div>
<div class="t" style="left:790.00px;top:751.23px;font-size:12.6px;color:#222;">Otevřena</div>
<div class="t" style="left:540.30px;top:751.23px;font-size:12.6px;color:#222;transform:scaleX(1.0275);transform-origin:0 0;">45359326</div>
<div class="t" style="left:640.30px;top:751.23px;font-size:12.6px;color:#222;transform:scaleX(1.0093);transform-origin:0 0;">24. 5. 2025 20:16</div>
<svg class="r" style="left:996.5px;top:749px;" width="12" height="12" viewBox="0 0 12 12"><path d="M2.3 2.3L9.7 9.7M9.7 2.3L2.3 9.7" stroke="#d42a2a" stroke-width="2"/></svg>
<svg class="r" style="left:1136.4px;top:749px;" width="12" height="12" viewBox="0 0 12 12"><path d="M2.3 2.3L9.7 9.7M9.7 2.3L2.3 9.7" stroke="#d42a2a" stroke-width="2"/></svg>
<svg class="r" style="left:1302.5px;top:749px;" width="12" height="12" viewBox="0 0 12 12"><path d="M2.3 2.3L9.7 9.7M9.7 2.3L2.3 9.7" stroke="#d42a2a" stroke-width="2"/></svg>
<div class="r" style="left:181px;top:793px;width:1223px;height:1px;background:#dedede"></div>
<svg class="r" style="left:192px;top:776.5px;" width="20" height="9" viewBox="0 0 20 9"><g fill="none" stroke="#2272b4" stroke-width="1.2"><circle cx="4" cy="4.6" r="1.85"/><circle cx="9.95" cy="4.6" r="1.85"/><circle cx="15.8" cy="4.6" r="1.85"/></g></svg>
<svg class="r" style="left:218px;top:771px;" width="20" height="20" viewBox="0 0 20 20"><circle cx="9.95" cy="9.9" r="7.5" fill="none" stroke="#2272b4" stroke-width="1.2"/><circle cx="9.8" cy="6.5" r="0.75" fill="#2272b4"/><path d="M8.7 8.7Q9.6 8.8 9.6 9.7V11.8Q9.6 13.1 10.9 13.5" fill="none" stroke="#2272b4" stroke-width="1.1"/></svg>
<div class="t" style="left:256.50px;top:776.23px;font-size:12.6px;color:#222;">006</div>
<div class="t" style="left:336.10px;top:776.23px;font-size:12.6px;color:#222;">Dodavatel - školení 7</div>
<div class="t" style="left:790.00px;top:776.23px;font-size:12.6px;color:#222;">Otevřena</div>
<div class="t" style="left:540.30px;top:776.23px;font-size:12.6px;color:#222;transform:scaleX(1.0275);transform-origin:0 0;">12345678</div>
<div class="t" style="left:640.30px;top:776.23px;font-size:12.6px;color:#222;transform:scaleX(1.0093);transform-origin:0 0;">24. 5. 2025 20:17</div>
<svg class="r" style="left:996.5px;top:774px;" width="12" height="12" viewBox="0 0 12 12"><path d="M2.3 2.3L9.7 9.7M9.7 2.3L2.3 9.7" stroke="#d42a2a" stroke-width="2"/></svg>
<svg class="r" style="left:1136.4px;top:774px;" width="12" height="12" viewBox="0 0 12 12"><path d="M2.3 2.3L9.7 9.7M9.7 2.3L2.3 9.7" stroke="#d42a2a" stroke-width="2"/></svg>
<svg class="r" style="left:1302.5px;top:774px;" width="12" height="12" viewBox="0 0 12 12"><path d="M2.3 2.3L9.7 9.7M9.7 2.3L2.3 9.7" stroke="#d42a2a" stroke-width="2"/></svg>
<div class="r" style="left:181px;top:818px;width:1223px;height:1px;background:#dedede"></div>
<svg class="r" style="left:192px;top:801.5px;" width="20" height="9" viewBox="0 0 20 9"><g fill="none" stroke="#2272b4" stroke-width="1.2"><circle cx="4" cy="4.6" r="1.85"/><circle cx="9.95" cy="4.6" r="1.85"/><circle cx="15.8" cy="4.6" r="1.85"/></g></svg>
<svg class="r" style="left:218px;top:796px;" width="20" height="20" viewBox="0 0 20 20"><circle cx="9.95" cy="9.9" r="7.5" fill="none" stroke="#2272b4" stroke-width="1.2"/><circle cx="9.8" cy="6.5" r="0.75" fill="#2272b4"/><path d="M8.7 8.7Q9.6 8.8 9.6 9.7V11.8Q9.6 13.1 10.9 13.5" fill="none" stroke="#2272b4" stroke-width="1.1"/></svg>
<div class="t" style="left:256.50px;top:801.23px;font-size:12.6px;color:#222;">007</div>
<div class="t" style="left:336.10px;top:801.23px;font-size:12.6px;color:#222;">Dodavatel - školení 4</div>
<div class="t" style="left:790.00px;top:801.23px;font-size:12.6px;color:#222;">Podána po lhůtě</div>
<div class="t" style="left:540.30px;top:801.23px;font-size:12.6px;color:#222;transform:scaleX(1.0275);transform-origin:0 0;">12345678</div>
<div class="t" style="left:640.30px;top:801.23px;font-size:12.6px;color:#222;transform:scaleX(1.0093);transform-origin:0 0;">24. 5. 2025 20:36</div>
<svg class="r" style="left:996.5px;top:799px;" width="12" height="12" viewBox="0 0 12 12"><path d="M1.5 6.5L4.6 9.5L10.8 2.6" fill="none" stroke="#3bb83b" stroke-width="2"/></svg>
<svg class="r" style="left:1136.4px;top:799px;" width="12" height="12" viewBox="0 0 12 12"><path d="M2.3 2.3L9.7 9.7M9.7 2.3L2.3 9.7" stroke="#d42a2a" stroke-width="2"/></svg>
<svg class="r" style="left:1302.5px;top:799px;" width="12" height="12" viewBox="0 0 12 12"><path d="M2.3 2.3L9.7 9.7M9.7 2.3L2.3 9.7" stroke="#d42a2a" stroke-width="2"/></svg>
<svg class="r" style="left:192px;top:826.5px;" width="20" height="9" viewBox="0 0 20 9"><g fill="none" stroke="#2272b4" stroke-width="1.2"><circle cx="4" cy="4.6" r="1.85"/><circle cx="9.95" cy="4.6" r="1.85"/><circle cx="15.8" cy="4.6" r="1.85"/></g></svg>
<svg class="r" style="left:218px;top:821px;" width="20" height="20" viewBox="0 0 20 20"><circle cx="9.95" cy="9.9" r="7.5" fill="none" stroke="#2272b4" stroke-width="1.2"/><circle cx="9.8" cy="6.5" r="0.75" fill="#2272b4"/><path d="M8.7 8.7Q9.6 8.8 9.6 9.7V11.8Q9.6 13.1 10.9 13.5" fill="none" stroke="#2272b4" stroke-width="1.1"/></svg>
<div class="t" style="left:256.50px;top:826.23px;font-size:12.6px;color:#222;">008</div>
<div class="t" style="left:336.10px;top:826.23px;font-size:12.6px;color:#222;">Dodavatel - školení 6</div>
<div class="t" style="left:790.00px;top:826.23px;font-size:12.6px;color:#222;">Otevírání zahájeno</div>
<div class="t" style="left:540.30px;top:826.23px;font-size:12.6px;color:#222;transform:scaleX(1.0275);transform-origin:0 0;">45359326</div>
<div class="t" style="left:640.30px;top:826.23px;font-size:12.6px;color:#222;transform:scaleX(1.0093);transform-origin:0 0;">24. 5. 2025 20:29</div>
<svg class="r" style="left:996.5px;top:824px;" width="12" height="12" viewBox="0 0 12 12"><path d="M2.3 2.3L9.7 9.7M9.7 2.3L2.3 9.7" stroke="#d42a2a" stroke-width="2"/></svg>
<svg class="r" style="left:1136.4px;top:824px;" width="12" height="12" viewBox="0 0 12 12"><path d="M1.5 6.5L4.6 9.5L10.8 2.6" fill="none" stroke="#3bb83b" stroke-width="2"/></svg>
<svg class="r" style="left:1302.5px;top:824px;" width="12" height="12" viewBox="0 0 12 12"><path d="M2.3 2.3L9.7 9.7M9.7 2.3L2.3 9.7" stroke="#d42a2a" stroke-width="2"/></svg>
<div class="r" style="left:216px;top:668px;width:24px;height:26px;border:1px solid #e0141e"></div>
</body></html>
